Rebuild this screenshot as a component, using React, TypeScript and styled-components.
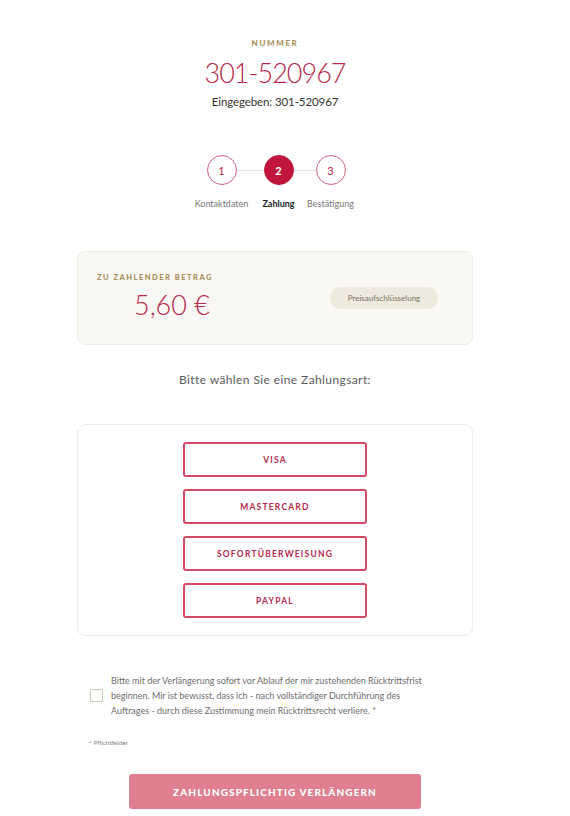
import React, { useState } from 'react';
import styled, { createGlobalStyle } from 'styled-components';

const GlobalStyle = createGlobalStyle`
  html, body {
    margin: 0;
    padding: 0;
    background: #ffffff;
  }

  body {
    font-family: Lato, "Open Sans", sans-serif;
    color: #333333;
  }
`;

const Page = styled.div`
  width: 550px;
  display: flex;
  flex-direction: column;
  align-items: center;
  padding-top: 38px;
  box-sizing: border-box;
`;

const Header = styled.div`
  display: flex;
  flex-direction: column;
  align-items: center;
`;

const Eyebrow = styled.div`
  font-size: 8px;
  font-weight: 900;
  letter-spacing: 1.6px;
  color: #a8905c;
  text-transform: uppercase;
`;

const Number = styled.div`
  margin-top: 9px;
  font-size: 27px;
  font-weight: 300;
  line-height: 32px;
  color: #b5294b;
  letter-spacing: -1px;
`;

const Entered = styled.div`
  margin-top: 6px;
  font-size: 11.5px;
  color: #333333;
  letter-spacing: -0.1px;
`;

const Stepper = styled.div`
  display: flex;
  align-items: flex-start;
  margin-top: 47px;
  margin-left: 2px;
`;

const Step = styled.div`
  display: flex;
  flex-direction: column;
  align-items: center;
  width: 30px;
`;

const Circle = styled.div<{ $active?: boolean }>`
  width: 30px;
  height: 30px;
  box-sizing: border-box;
  border-radius: 50%;
  border: 1.5px solid ${({ $active }) => ($active ? '#c0163d' : '#cf6479')};
  background: ${({ $active }) => ($active ? '#c0163d' : '#ffffff')};
  color: ${({ $active }) => ($active ? '#ffffff' : '#c0163d')};
  font-size: 11px;
  font-weight: ${({ $active }) => ($active ? 700 : 400)};
  display: flex;
  align-items: center;
  justify-content: center;
`;

const StepLabel = styled.div<{ $active?: boolean }>`
  margin-top: 13px;
  white-space: nowrap;
  font-size: 9px;
  font-weight: ${({ $active }) => ($active ? 700 : 400)};
  color: ${({ $active }) => ($active ? '#222222' : '#777777')};
`;

const Connector = styled.div<{ $w: number }>`
  width: ${({ $w }) => $w}px;
  height: 1px;
  margin-top: 15px;
  background: #e2e2e2;
`;

const Card = styled.div<{ $tone: 'cream' | 'white' }>`
  width: 396px;
  box-sizing: border-box;
  border-radius: 8px;
  border: 1px solid ${({ $tone }) => ($tone === 'cream' ? '#efece4' : '#ececec')};
  background: ${({ $tone }) => ($tone === 'cream' ? '#f9f8f4' : '#ffffff')};
`;

const AmountCard = styled(Card)`
  margin-top: 42px;
  height: 94px;
  padding: 21px 34px 0 19px;
  display: grid;
  grid-template-columns: 1fr auto;
  align-items: start;
`;

const AmountLabel = styled(Eyebrow)`
  font-size: 7.5px;
  letter-spacing: 1.5px;
`;

const Amount = styled.div`
  margin-top: 8px;
  margin-left: 37px;
  font-size: 27px;
  font-weight: 300;
  line-height: 30px;
  color: #b5294b;
`;

const Pill = styled.button`
  margin-top: 14px;
  width: 108px;
  height: 22px;
  border: none;
  border-radius: 11px;
  background: #efeade;
  color: #7b7264;
  font-family: inherit;
  font-size: 8px;
  cursor: pointer;
`;

const Prompt = styled.div`
  margin-top: 27px;
  font-size: 12px;
  letter-spacing: 0.4px;
  color: #5a5a5a;
`;

const MethodCard = styled(Card)`
  margin-top: 37px;
  height: 212px;
  padding-top: 17px;
  display: flex;
  flex-direction: column;
  align-items: center;
  gap: 12px;
`;

const MethodButton = styled.button`
  width: 184px;
  height: 35px;
  box-sizing: border-box;
  border: 2px solid #d44a64;
  border-radius: 3px;
  background: #ffffff;
  color: #b5294b;
  font-family: inherit;
  font-size: 8.5px;
  font-weight: 700;
  letter-spacing: 1.2px;
  cursor: pointer;
`;

const Consent = styled.label`
  margin-top: 37px;
  width: 396px;
  box-sizing: border-box;
  padding-left: 13px;
  display: flex;
  align-items: center;
  gap: 8px;
  cursor: pointer;
`;

const Box = styled.span<{ $checked: boolean }>`
  flex: none;
  width: 11px;
  height: 11px;
  border: 1px solid #cfc6b4;
  border-radius: 1px;
  background: ${({ $checked }) => ($checked ? '#c0163d' : '#ffffff')};
`;

const ConsentText = styled.span`
  width: 345px;
  font-size: 9px;
  line-height: 15px;
  color: #6e6e6e;
`;

const Required = styled.div`
  margin-top: 21px;
  width: 396px;
  font-size: 6.5px;
  color: #888888;
  padding-left: 12px;
  box-sizing: border-box;
`;

const Submit = styled.button`
  margin-top: 28px;
  width: 292px;
  height: 35px;
  border: none;
  border-radius: 3px;
  background: #e07f8f;
  color: #ffffff;
  font-family: inherit;
  font-size: 10px;
  font-weight: 900;
  letter-spacing: 1.1px;
  cursor: pointer;
`;

const steps = [
  { n: '1', label: 'Kontaktdaten' },
  { n: '2', label: 'Zahlung', active: true },
  { n: '3', label: 'Bestätigung' },
];

const methods = ['VISA', 'MASTERCARD', 'SOFORTÜBERWEISUNG', 'PAYPAL'];

export default function App (): React.ReactElement {
  const [agreed, setAgreed] = useState(false);

  return (
    <>
      <GlobalStyle />
      <Page>
        <Header>
          <Eyebrow>Nummer</Eyebrow>
          <Number>301-520967</Number>
          <Entered>Eingegeben: 301-520967</Entered>
        </Header>

        <Stepper>
          {steps.map((s, i) => (
            <React.Fragment key={s.n}>
              {i > 0 && <Connector $w={i === 1 ? 27 : 22} />}
              <Step>
                <Circle $active={s.active}>{s.n}</Circle>
                <StepLabel $active={s.active}>{s.label}</StepLabel>
              </Step>
            </React.Fragment>
          ))}
        </Stepper>

        <AmountCard $tone='cream'>
          <div>
            <AmountLabel>Zu zahlender Betrag</AmountLabel>
            <Amount>5,60 €</Amount>
          </div>
          <Pill>Preisaufschlüsselung</Pill>
        </AmountCard>

        <Prompt>Bitte wählen Sie eine Zahlungsart:</Prompt>

        <MethodCard $tone='white'>
          {methods.map((m) => (
            <MethodButton key={m}>{m}</MethodButton>
          ))}
        </MethodCard>

        <Consent onClick={() => setAgreed(!agreed)}>
          <Box $checked={agreed} />
          <ConsentText>
            Bitte mit der Verlängerung sofort vor Ablauf der mir zustehenden Rücktrittsfrist
            <br />
            beginnen. Mir ist bewusst, dass ich - nach vollständiger Durchführung des
            <br />
            Auftrages - durch diese Zustimmung mein Rücktrittsrecht verliere. *
          </ConsentText>
        </Consent>

        <Required>* Pflichtfelder</Required>

        <Submit>ZAHLUNGSPFLICHTIG VERLÄNGERN</Submit>
      </Page>
    </>
  );
}
